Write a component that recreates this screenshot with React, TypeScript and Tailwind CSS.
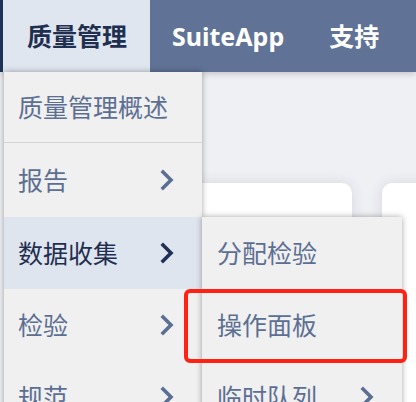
import React from "react";

const font = { fontFamily: '"Noto Sans", "Noto Sans CJK SC", sans-serif' };

function Chevron({ dark = false }: { dark?: boolean }) {
  return (
    <svg width="14" height="22" viewBox="0 0 14 22" fill="none">
      <path
        d="M3 3L11 11L3 19"
        stroke={dark ? "#1f3157" : "#5c6f93"}
        strokeWidth="3.6"
        strokeLinecap="square"
        strokeLinejoin="miter"
      />
    </svg>
  );
}

type Item = { label: string; sub?: boolean; active?: boolean; h: string; divider?: boolean };

const mainItems: Item[] = [
  { label: "质量管理概述", h: "h-[71px]", divider: true },
  { label: "报告", sub: true, h: "h-[74px]" },
  { label: "数据收集", sub: true, active: true, h: "h-[72px]" },
  { label: "检验", sub: true, h: "h-[72px]" },
  { label: "规范", sub: true, h: "h-[72px]" },
];

const subItems: Item[] = [
  { label: "分配检验", h: "h-[72px]" },
  { label: "操作面板", h: "h-[72px]" },
  { label: "临时队列", sub: true, h: "h-[72px]" },
];

function MenuRow({ item, pl }: { item: Item; pl: string }) {
  return (
    <div
      className={`flex items-center justify-between ${pl} pr-[28px] ${item.h} ${
        item.active ? "bg-[#dfe5ef] text-[#1f2f50]" : "text-[#5c6f93]"
      } ${item.divider ? "border-b border-[#d5d6d8]" : ""}`}
    >
      <span className="text-[25px] leading-none">{item.label}</span>
      {item.sub && <Chevron dark={item.active} />}
    </div>
  );
}

export default function App() {
  return (
    <div className="relative w-[416px] h-[402px] overflow-hidden bg-[#eff0f4]" style={font}>
      {/* Top navigation */}
      <div className="relative z-10 flex h-[72px] bg-[#607396] shadow-[0_2px_6px_rgba(0,0,0,0.18)]">
        <div className="flex items-center w-[150px] h-full bg-[#e0e6f0] border-l-[3px] border-[#1e3358] pl-[24px]">
          <span className="text-[25px] font-bold text-[#1f2f50] leading-none">质量管理</span>
        </div>
        <div className="flex items-center pl-[22px] gap-[45px] text-white font-bold">
          <span className="text-[25px] leading-none">SuiteApp</span>
          <span className="text-[25px] leading-none">支持</span>
        </div>
      </div>

      {/* Page content behind the menus */}
      <div className="flex gap-[30px] pl-[16px] pt-[111px]">
        <div className="w-[336px] h-[240px] shrink-0 rounded-[10px] bg-white shadow-[0_0_14px_rgba(40,50,80,0.12)]" />
        <div className="w-[300px] h-[240px] shrink-0 rounded-[10px] bg-white shadow-[0_0_14px_rgba(40,50,80,0.12)] pt-[39px] pl-[2px]">
          <div className="w-[2px] h-[25px] bg-[#e07a10] border-r border-black" />
        </div>
      </div>

      {/* Quality management dropdown */}
      <div className="absolute left-[4px] top-[72px] w-[198px] h-[340px] bg-[#f0f0f0] shadow-[0_0_6px_rgba(0,0,0,0.35)] z-20">
        {mainItems.map((it) => (
          <MenuRow key={it.label} item={it} pl="pl-[14px]" />
        ))}
      </div>

      {/* Data collection submenu */}
      <div className="absolute left-[202px] top-[217px] w-[200px] h-[200px] bg-[#f0f0f0] shadow-[0_0_6px_rgba(0,0,0,0.35)] z-30">
        {subItems.map((it) => (
          <MenuRow key={it.label} item={it} pl="pl-[15px]" />
        ))}
      </div>

      {/* Highlight frame */}
      <div className="absolute left-[184px] top-[289px] w-[223px] h-[74px] rounded-[6px] border-[4px] border-[#ff2214] z-40" />
    </div>
  );
}
